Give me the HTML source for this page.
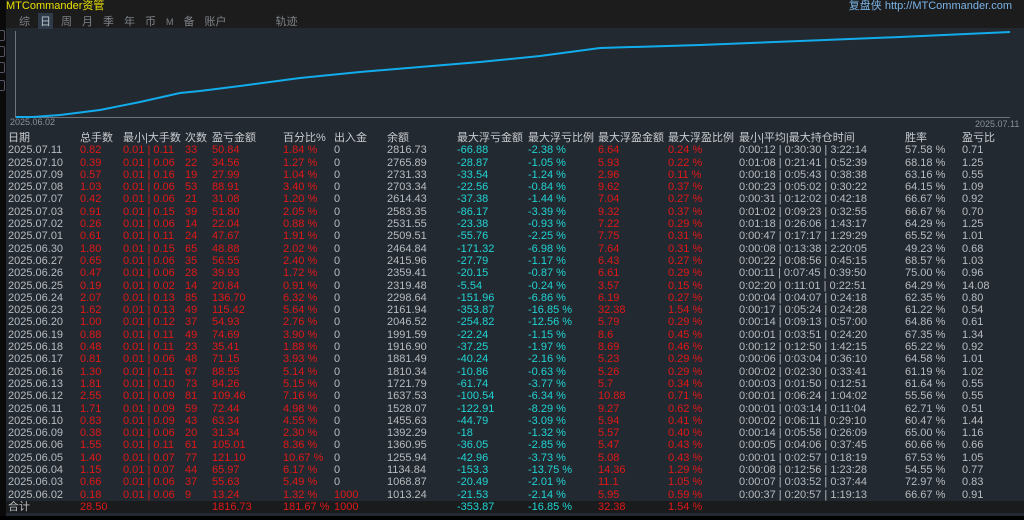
<!DOCTYPE html>
<html><head><meta charset="utf-8"><style>
*{margin:0;padding:0;box-sizing:border-box}
body{width:1024px;height:520px;background:#1c1c1c;overflow:hidden;position:relative;font-family:"Liberation Sans","Noto Sans CJK SC",sans-serif;font-size:11px;color:#c4c8cc}
.abs{position:absolute}
#left{left:0;top:0;width:6px;height:520px;background:#0a0a0a}
.lb{position:absolute;left:0;width:5px;height:11px;border:1px solid #556;border-left:none;border-radius:0 2px 2px 0}
#panel{left:6px;top:28px;width:1018px;height:488px;background:#232930}
#title{left:6px;top:-3px;color:#e8e000;font-size:11px}
#site{right:12px;top:-3px;color:#7ab4e8;font-size:11px}
#tabs{left:17px;top:13px;color:#7d8288;font-size:11px}
#tabs span{display:inline-block;margin-right:6px;padding:0 2px}
#tabs .on{background:#2f3a48;color:#b8c2cc}
table{position:absolute;left:6px;top:132px;border-collapse:collapse;table-layout:fixed}
td{height:12.3px;line-height:12.3px;padding:0;white-space:nowrap;overflow:hidden;font-size:11px}
td:first-child{padding-left:2px}
.h td{color:#c8ccd0;height:12.3px}
.r{color:#e01818}.c{color:#20d4d4}.g{color:#b8bcc0}
.tot td{background:#191b1d}
#bottom{left:0;top:516px;width:1024px;height:4px;background:#000}
</style></head><body>
<div id="panel" class="abs"></div>
<div id="left" class="abs">
<div class="lb" style="top:30px"></div><div class="lb" style="top:46px"></div><div class="lb" style="top:62px"></div><div class="lb" style="top:80px"></div>
</div>
<div id="title" class="abs">MTCommander资管</div>
<div id="site" class="abs">复盘侠 http://MTCommander.com</div>
<div id="tabs" class="abs"><span>综</span><span class="on">日</span><span>周</span><span>月</span><span>季</span><span>年</span><span>币</span><span style="font-size:9px">M</span><span>备</span><span style="margin-right:45px">账户</span><span>轨迹</span></div>
<svg class="abs" style="left:0;top:0" width="1024" height="130">
<line x1="15.5" y1="31" x2="15.5" y2="117" stroke="#707478" stroke-width="1"/>
<line x1="15" y1="117.5" x2="1010" y2="117.5" stroke="#707478" stroke-width="1"/>
<polyline fill="none" stroke="#12acec" stroke-width="2" points="16,117 33,117 60,115 100,110 140,102 180,93 200,91 240,86 300,78 360,72 420,67 480,62 540,56 600,48 700,45 800,41 900,37 1010,32"/>
<text x="10" y="125" fill="#8a9096" font-size="9" font-family="Liberation Sans">2025.06.02</text>
<text x="975" y="127" fill="#8a9096" font-size="9" font-family="Liberation Sans">2025.07.11</text>
</svg>
<table>
<colgroup><col style="width:74px"><col style="width:43px"><col style="width:62px"><col style="width:27px"><col style="width:71px"><col style="width:51px"><col style="width:53px"><col style="width:70px"><col style="width:71px"><col style="width:70px"><col style="width:70px"><col style="width:71px"><col style="width:166px"><col style="width:57px"><col style="width:62px"></colgroup>
<tr class="h"><td>日期</td><td>总手数</td><td>最小|大手数</td><td>次数</td><td>盈亏金额</td><td>百分比%</td><td>出入金</td><td>余额</td><td>最大浮亏金额</td><td>最大浮亏比例</td><td>最大浮盈金额</td><td>最大浮盈比例</td><td>最小|平均|最大持仓时间</td><td>胜率</td><td>盈亏比</td></tr>
<tr><td class="g">2025.07.11</td><td class="r">0.82</td><td class="r">0.01 | 0.11</td><td class="r">33</td><td class="r">50.84</td><td class="r">1.84 %</td><td class="g">0</td><td class="g">2816.73</td><td class="c">-66.88</td><td class="c">-2.38 %</td><td class="r">6.64</td><td class="r">0.24 %</td><td class="g">0:00:12 | 0:30:30 | 3:22:14</td><td class="g">57.58 %</td><td class="g">0.71</td></tr>
<tr><td class="g">2025.07.10</td><td class="r">0.39</td><td class="r">0.01 | 0.06</td><td class="r">22</td><td class="r">34.56</td><td class="r">1.27 %</td><td class="g">0</td><td class="g">2765.89</td><td class="c">-28.87</td><td class="c">-1.05 %</td><td class="r">5.93</td><td class="r">0.22 %</td><td class="g">0:01:08 | 0:21:41 | 0:52:39</td><td class="g">68.18 %</td><td class="g">1.25</td></tr>
<tr><td class="g">2025.07.09</td><td class="r">0.57</td><td class="r">0.01 | 0.16</td><td class="r">19</td><td class="r">27.99</td><td class="r">1.04 %</td><td class="g">0</td><td class="g">2731.33</td><td class="c">-33.54</td><td class="c">-1.24 %</td><td class="r">2.96</td><td class="r">0.11 %</td><td class="g">0:00:18 | 0:05:43 | 0:38:38</td><td class="g">63.16 %</td><td class="g">0.55</td></tr>
<tr><td class="g">2025.07.08</td><td class="r">1.03</td><td class="r">0.01 | 0.06</td><td class="r">53</td><td class="r">88.91</td><td class="r">3.40 %</td><td class="g">0</td><td class="g">2703.34</td><td class="c">-22.56</td><td class="c">-0.84 %</td><td class="r">9.62</td><td class="r">0.37 %</td><td class="g">0:00:23 | 0:05:02 | 0:30:22</td><td class="g">64.15 %</td><td class="g">1.09</td></tr>
<tr><td class="g">2025.07.07</td><td class="r">0.42</td><td class="r">0.01 | 0.06</td><td class="r">21</td><td class="r">31.08</td><td class="r">1.20 %</td><td class="g">0</td><td class="g">2614.43</td><td class="c">-37.38</td><td class="c">-1.44 %</td><td class="r">7.04</td><td class="r">0.27 %</td><td class="g">0:00:31 | 0:12:02 | 0:42:18</td><td class="g">66.67 %</td><td class="g">0.92</td></tr>
<tr><td class="g">2025.07.03</td><td class="r">0.91</td><td class="r">0.01 | 0.15</td><td class="r">39</td><td class="r">51.80</td><td class="r">2.05 %</td><td class="g">0</td><td class="g">2583.35</td><td class="c">-86.17</td><td class="c">-3.39 %</td><td class="r">9.32</td><td class="r">0.37 %</td><td class="g">0:01:02 | 0:09:23 | 0:32:55</td><td class="g">66.67 %</td><td class="g">0.70</td></tr>
<tr><td class="g">2025.07.02</td><td class="r">0.26</td><td class="r">0.01 | 0.06</td><td class="r">14</td><td class="r">22.04</td><td class="r">0.88 %</td><td class="g">0</td><td class="g">2531.55</td><td class="c">-23.38</td><td class="c">-0.93 %</td><td class="r">7.22</td><td class="r">0.29 %</td><td class="g">0:01:18 | 0:26:06 | 1:43:17</td><td class="g">64.29 %</td><td class="g">1.25</td></tr>
<tr><td class="g">2025.07.01</td><td class="r">0.61</td><td class="r">0.01 | 0.11</td><td class="r">24</td><td class="r">47.67</td><td class="r">1.91 %</td><td class="g">0</td><td class="g">2509.51</td><td class="c">-55.76</td><td class="c">-2.25 %</td><td class="r">7.75</td><td class="r">0.31 %</td><td class="g">0:00:47 | 0:17:17 | 1:29:29</td><td class="g">65.52 %</td><td class="g">1.01</td></tr>
<tr><td class="g">2025.06.30</td><td class="r">1.80</td><td class="r">0.01 | 0.15</td><td class="r">65</td><td class="r">48.88</td><td class="r">2.02 %</td><td class="g">0</td><td class="g">2464.84</td><td class="c">-171.32</td><td class="c">-6.98 %</td><td class="r">7.64</td><td class="r">0.31 %</td><td class="g">0:00:08 | 0:13:38 | 2:20:05</td><td class="g">49.23 %</td><td class="g">0.68</td></tr>
<tr><td class="g">2025.06.27</td><td class="r">0.65</td><td class="r">0.01 | 0.06</td><td class="r">35</td><td class="r">56.55</td><td class="r">2.40 %</td><td class="g">0</td><td class="g">2415.96</td><td class="c">-27.79</td><td class="c">-1.17 %</td><td class="r">6.43</td><td class="r">0.27 %</td><td class="g">0:00:22 | 0:08:56 | 0:45:15</td><td class="g">68.57 %</td><td class="g">1.03</td></tr>
<tr><td class="g">2025.06.26</td><td class="r">0.47</td><td class="r">0.01 | 0.06</td><td class="r">28</td><td class="r">39.93</td><td class="r">1.72 %</td><td class="g">0</td><td class="g">2359.41</td><td class="c">-20.15</td><td class="c">-0.87 %</td><td class="r">6.61</td><td class="r">0.29 %</td><td class="g">0:00:11 | 0:07:45 | 0:39:50</td><td class="g">75.00 %</td><td class="g">0.96</td></tr>
<tr><td class="g">2025.06.25</td><td class="r">0.19</td><td class="r">0.01 | 0.02</td><td class="r">14</td><td class="r">20.84</td><td class="r">0.91 %</td><td class="g">0</td><td class="g">2319.48</td><td class="c">-5.54</td><td class="c">-0.24 %</td><td class="r">3.57</td><td class="r">0.15 %</td><td class="g">0:02:20 | 0:11:01 | 0:22:51</td><td class="g">64.29 %</td><td class="g">14.08</td></tr>
<tr><td class="g">2025.06.24</td><td class="r">2.07</td><td class="r">0.01 | 0.13</td><td class="r">85</td><td class="r">136.70</td><td class="r">6.32 %</td><td class="g">0</td><td class="g">2298.64</td><td class="c">-151.96</td><td class="c">-6.86 %</td><td class="r">6.19</td><td class="r">0.27 %</td><td class="g">0:00:04 | 0:04:07 | 0:24:18</td><td class="g">62.35 %</td><td class="g">0.80</td></tr>
<tr><td class="g">2025.06.23</td><td class="r">1.62</td><td class="r">0.01 | 0.13</td><td class="r">49</td><td class="r">115.42</td><td class="r">5.64 %</td><td class="g">0</td><td class="g">2161.94</td><td class="c">-353.87</td><td class="c">-16.85 %</td><td class="r">32.38</td><td class="r">1.54 %</td><td class="g">0:00:17 | 0:05:24 | 0:24:28</td><td class="g">61.22 %</td><td class="g">0.54</td></tr>
<tr><td class="g">2025.06.20</td><td class="r">1.00</td><td class="r">0.01 | 0.12</td><td class="r">37</td><td class="r">54.93</td><td class="r">2.76 %</td><td class="g">0</td><td class="g">2046.52</td><td class="c">-254.82</td><td class="c">-12.56 %</td><td class="r">5.79</td><td class="r">0.29 %</td><td class="g">0:00:14 | 0:09:13 | 0:57:00</td><td class="g">64.86 %</td><td class="g">0.61</td></tr>
<tr><td class="g">2025.06.19</td><td class="r">0.88</td><td class="r">0.01 | 0.11</td><td class="r">49</td><td class="r">74.69</td><td class="r">3.90 %</td><td class="g">0</td><td class="g">1991.59</td><td class="c">-22.24</td><td class="c">-1.15 %</td><td class="r">8.6</td><td class="r">0.45 %</td><td class="g">0:00:01 | 0:03:51 | 0:24:20</td><td class="g">67.35 %</td><td class="g">1.34</td></tr>
<tr><td class="g">2025.06.18</td><td class="r">0.48</td><td class="r">0.01 | 0.11</td><td class="r">23</td><td class="r">35.41</td><td class="r">1.88 %</td><td class="g">0</td><td class="g">1916.90</td><td class="c">-37.25</td><td class="c">-1.97 %</td><td class="r">8.69</td><td class="r">0.46 %</td><td class="g">0:00:12 | 0:12:50 | 1:42:15</td><td class="g">65.22 %</td><td class="g">0.92</td></tr>
<tr><td class="g">2025.06.17</td><td class="r">0.81</td><td class="r">0.01 | 0.06</td><td class="r">48</td><td class="r">71.15</td><td class="r">3.93 %</td><td class="g">0</td><td class="g">1881.49</td><td class="c">-40.24</td><td class="c">-2.16 %</td><td class="r">5.23</td><td class="r">0.29 %</td><td class="g">0:00:06 | 0:03:04 | 0:36:10</td><td class="g">64.58 %</td><td class="g">1.01</td></tr>
<tr><td class="g">2025.06.16</td><td class="r">1.30</td><td class="r">0.01 | 0.11</td><td class="r">67</td><td class="r">88.55</td><td class="r">5.14 %</td><td class="g">0</td><td class="g">1810.34</td><td class="c">-10.86</td><td class="c">-0.63 %</td><td class="r">5.26</td><td class="r">0.29 %</td><td class="g">0:00:02 | 0:02:30 | 0:33:41</td><td class="g">61.19 %</td><td class="g">1.02</td></tr>
<tr><td class="g">2025.06.13</td><td class="r">1.81</td><td class="r">0.01 | 0.10</td><td class="r">73</td><td class="r">84.26</td><td class="r">5.15 %</td><td class="g">0</td><td class="g">1721.79</td><td class="c">-61.74</td><td class="c">-3.77 %</td><td class="r">5.7</td><td class="r">0.34 %</td><td class="g">0:00:03 | 0:01:50 | 0:12:51</td><td class="g">61.64 %</td><td class="g">0.55</td></tr>
<tr><td class="g">2025.06.12</td><td class="r">2.55</td><td class="r">0.01 | 0.09</td><td class="r">81</td><td class="r">109.46</td><td class="r">7.16 %</td><td class="g">0</td><td class="g">1637.53</td><td class="c">-100.54</td><td class="c">-6.34 %</td><td class="r">10.88</td><td class="r">0.71 %</td><td class="g">0:00:01 | 0:06:24 | 1:04:02</td><td class="g">55.56 %</td><td class="g">0.55</td></tr>
<tr><td class="g">2025.06.11</td><td class="r">1.71</td><td class="r">0.01 | 0.09</td><td class="r">59</td><td class="r">72.44</td><td class="r">4.98 %</td><td class="g">0</td><td class="g">1528.07</td><td class="c">-122.91</td><td class="c">-8.29 %</td><td class="r">9.27</td><td class="r">0.62 %</td><td class="g">0:00:01 | 0:03:14 | 0:11:04</td><td class="g">62.71 %</td><td class="g">0.51</td></tr>
<tr><td class="g">2025.06.10</td><td class="r">0.83</td><td class="r">0.01 | 0.09</td><td class="r">43</td><td class="r">63.34</td><td class="r">4.55 %</td><td class="g">0</td><td class="g">1455.63</td><td class="c">-44.79</td><td class="c">-3.09 %</td><td class="r">5.94</td><td class="r">0.41 %</td><td class="g">0:00:02 | 0:06:11 | 0:29:10</td><td class="g">60.47 %</td><td class="g">1.44</td></tr>
<tr><td class="g">2025.06.09</td><td class="r">0.38</td><td class="r">0.01 | 0.06</td><td class="r">20</td><td class="r">31.34</td><td class="r">2.30 %</td><td class="g">0</td><td class="g">1392.29</td><td class="c">-18</td><td class="c">-1.32 %</td><td class="r">5.57</td><td class="r">0.40 %</td><td class="g">0:00:14 | 0:05:58 | 0:26:09</td><td class="g">65.00 %</td><td class="g">1.16</td></tr>
<tr><td class="g">2025.06.06</td><td class="r">1.55</td><td class="r">0.01 | 0.11</td><td class="r">61</td><td class="r">105.01</td><td class="r">8.36 %</td><td class="g">0</td><td class="g">1360.95</td><td class="c">-36.05</td><td class="c">-2.85 %</td><td class="r">5.47</td><td class="r">0.43 %</td><td class="g">0:00:05 | 0:04:06 | 0:37:45</td><td class="g">60.66 %</td><td class="g">0.66</td></tr>
<tr><td class="g">2025.06.05</td><td class="r">1.40</td><td class="r">0.01 | 0.07</td><td class="r">77</td><td class="r">121.10</td><td class="r">10.67 %</td><td class="g">0</td><td class="g">1255.94</td><td class="c">-42.96</td><td class="c">-3.73 %</td><td class="r">5.08</td><td class="r">0.43 %</td><td class="g">0:00:01 | 0:02:57 | 0:18:19</td><td class="g">67.53 %</td><td class="g">1.05</td></tr>
<tr><td class="g">2025.06.04</td><td class="r">1.15</td><td class="r">0.01 | 0.07</td><td class="r">44</td><td class="r">65.97</td><td class="r">6.17 %</td><td class="g">0</td><td class="g">1134.84</td><td class="c">-153.3</td><td class="c">-13.75 %</td><td class="r">14.36</td><td class="r">1.29 %</td><td class="g">0:00:08 | 0:12:56 | 1:23:28</td><td class="g">54.55 %</td><td class="g">0.77</td></tr>
<tr><td class="g">2025.06.03</td><td class="r">0.66</td><td class="r">0.01 | 0.06</td><td class="r">37</td><td class="r">55.63</td><td class="r">5.49 %</td><td class="g">0</td><td class="g">1068.87</td><td class="c">-20.49</td><td class="c">-2.01 %</td><td class="r">11.1</td><td class="r">1.05 %</td><td class="g">0:00:07 | 0:03:52 | 0:37:44</td><td class="g">72.97 %</td><td class="g">0.83</td></tr>
<tr><td class="g">2025.06.02</td><td class="r">0.18</td><td class="r">0.01 | 0.06</td><td class="r">9</td><td class="r">13.24</td><td class="r">1.32 %</td><td class="r">1000</td><td class="g">1013.24</td><td class="c">-21.53</td><td class="c">-2.14 %</td><td class="r">5.95</td><td class="r">0.59 %</td><td class="g">0:00:37 | 0:20:57 | 1:19:13</td><td class="g">66.67 %</td><td class="g">0.91</td></tr>
<tr class="tot"><td class="g">合计</td><td class="r">28.50</td><td></td><td></td><td class="r">1816.73</td><td class="r">181.67 %</td><td class="r">1000</td><td></td><td class="c">-353.87</td><td class="c">-16.85 %</td><td class="r">32.38</td><td class="r">1.54 %</td><td></td><td></td><td></td></tr>
</table>
<div id="bottom" class="abs"></div>
</body></html>
